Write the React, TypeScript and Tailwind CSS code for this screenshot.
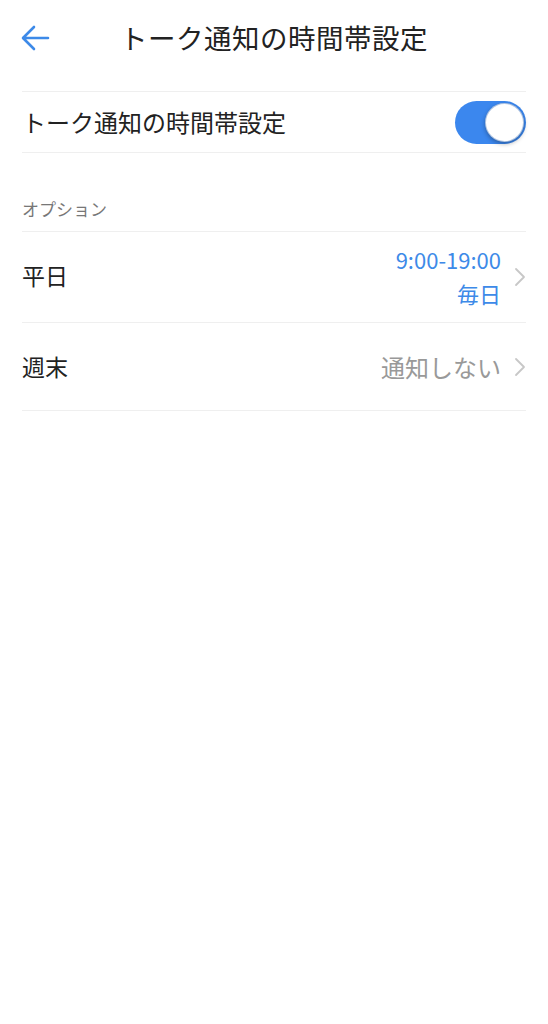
import React, { useState } from 'react';

const font = { fontFamily: '"Noto Sans CJK JP", "Noto Sans", sans-serif' };

const Chevron: React.FC = () => (
  <svg className="w-[12px] h-[20px] text-[#c7c7c7]" viewBox="0 0 12 20" fill="none" stroke="currentColor">
    <path d="M2 2l8 8-8 8" strokeWidth={1.8} strokeLinecap="round" strokeLinejoin="round" />
  </svg>
);

const App: React.FC = () => {
  const [enabled, setEnabled] = useState(true);

  return (
    <div className="min-h-screen bg-white text-[#222]" style={font}>
      {/* Header */}
      <div className="relative h-[78px] flex items-center justify-center">
        <button className="absolute left-[20px] top-[24px] text-[#3d8ae8]">
          <svg className="w-[32px] h-[28px]" viewBox="0 0 32 28" fill="none" stroke="currentColor">
            <path d="M28 14H4M14 3L3 14l11 11" strokeWidth={2.6} strokeLinecap="round" strokeLinejoin="round" />
          </svg>
        </button>
        <h1 className="text-[27.5px] leading-none font-normal tracking-[0.5px] -mt-[2px]">トーク通知の時間帯設定</h1>
      </div>

      <div className="px-[22px] mt-[13px]">
        {/* Toggle row */}
        <div className="h-[62px] flex items-center justify-between border-t border-b border-[#efefef]">
          <span className="text-[24px]">トーク通知の時間帯設定</span>
          <button
            onClick={() => setEnabled(!enabled)}
            className={`relative w-[71px] h-[43px] rounded-full flex items-center px-[2px] ${enabled ? 'bg-[#3b87ee] justify-end' : 'bg-[#e5e5e5] justify-start'}`}
          >
            <span className="w-[39px] h-[39px] rounded-full bg-white shadow-[0_2px_4px_rgba(0,0,0,0.3)] border border-[#3c6fb4]/40" />
          </button>
        </div>

        {/* Section header */}
        <div className="h-[78px] flex items-end pb-[10px]">
          <span className="text-[17px] text-[#777]">オプション</span>
        </div>

        {/* Weekday */}
        <div className="h-[91px] flex items-center justify-between border-t border-[#efefef]">
          <span className="text-[23px] -mt-[3px]">平日</span>
          <div className="flex items-center gap-[13px]">
            <div className="flex flex-col items-end text-[#3d8ae8] text-[22px] leading-[34px] -mt-[3px]">
              <span>9:00-19:00</span>
              <span>毎日</span>
            </div>
            <Chevron />
          </div>
        </div>

        {/* Weekend */}
        <div className="h-[89px] flex items-center justify-between border-t border-b border-[#efefef]">
          <span className="text-[23px]">週末</span>
          <div className="flex items-center gap-[13px]">
            <span className="text-[24px] text-[#999]">通知しない</span>
            <Chevron />
          </div>
        </div>
      </div>
    </div>
  );
};

export default App;
